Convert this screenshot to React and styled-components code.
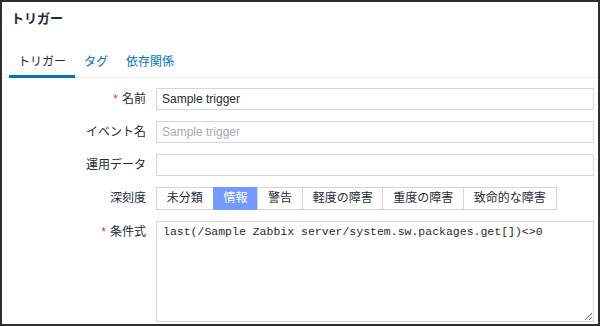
import styled, { createGlobalStyle } from "styled-components";

const GlobalStyle = createGlobalStyle`
  body {
    margin: 0;
    background: #ffffff;
    font-family: "Liberation Sans", Arial, "Noto Sans CJK JP", sans-serif;
    color: #1f2c33;
  }
`;

const Frame = styled.div`
  width: 600px;
  height: 326px;
  box-sizing: border-box;
  border: 2px solid #2e2e2e;
  background: #ffffff;
  overflow: hidden;
`;

const Title = styled.h2`
  margin: 0;
  padding: 8px 0 0 9px;
  font-size: 13px;
  line-height: 18px;
  font-weight: bold;
  color: #1f2c33;
`;

const TabBar = styled.div`
  display: flex;
  margin-top: 18px;
  padding-left: 7px;
  height: 31px;
  border-bottom: 1px solid #ebeef0;
`;

const Tab = styled.div`
  padding: 8px 9px 5px;
  font-size: 12px;
  line-height: 16px;
  height: 16px;
  color: ${(p) => (p.$active ? "#1f2c33" : "#0275b8")};
  border-bottom: 3px solid ${(p) => (p.$active ? "#0275b8" : "transparent")};
`;

const Form = styled.div`
  display: grid;
  grid-template-columns: 144px 1fr;
  column-gap: 10px;
  row-gap: 11px;
  padding: 10px 4px 0 0;
`;

const Label = styled.div`
  text-align: right;
  font-size: 12px;
  line-height: 22px;
  color: #1f2c33;
`;

const Required = styled.span`
  color: #e33734;
  margin-right: 4px;
  font-size: 12px;
`;

const TextInput = styled.input`
  box-sizing: border-box;
  width: 100%;
  height: 22px;
  margin: 0;
  border: 1px solid #cfd8dc;
  padding: 0 5px;
  font-family: inherit;
  font-size: 12px;
  color: #1f2c33;
  background: #ffffff;
  outline: none;

  &::placeholder {
    color: #a3acb0;
  }
`;

const Segments = styled.div`
  display: flex;
`;

const Segment = styled.div`
  box-sizing: border-box;
  height: 23px;
  padding: 0 9.8px;
  font-size: 12px;
  line-height: 21px;
  border: 1px solid ${(p) => (p.$active ? "#7499ff" : "#cfd8dc")};
  margin-left: -1px;
  background: ${(p) => (p.$active ? "#7499ff" : "#ffffff")};
  color: ${(p) => (p.$active ? "#ffffff" : "#1f2c33")};

  &:first-child {
    margin-left: 0;
  }
`;

const Expression = styled.textarea`
  box-sizing: border-box;
  width: 100%;
  height: 101px;
  margin: 0;
  border: 1px solid #cfd8dc;
  padding: 3px 6px;
  font-family: "Liberation Mono", "DejaVu Sans Mono", monospace;
  font-size: 11.5px;
  line-height: 14px;
  color: #1f2c33;
  resize: vertical;
  outline: none;
`;

const severities = ["未分類", "情報", "警告", "軽度の障害", "重度の障害", "致命的な障害"];

export default function App() {
  return (
    <>
      <GlobalStyle />
      <Frame>
        <Title>トリガー</Title>
        <TabBar>
          <Tab $active>トリガー</Tab>
          <Tab>タグ</Tab>
          <Tab>依存関係</Tab>
        </TabBar>
        <Form>
          <Label>
            <Required>*</Required>名前
          </Label>
          <TextInput defaultValue="Sample trigger" />

          <Label>イベント名</Label>
          <TextInput placeholder="Sample trigger" />

          <Label>運用データ</Label>
          <TextInput />

          <Label>深刻度</Label>
          <Segments>
            {severities.map((s) => (
              <Segment key={s} $active={s === "情報"}>
                {s}
              </Segment>
            ))}
          </Segments>

          <Label>
            <Required>*</Required>条件式
          </Label>
          <Expression
            readOnly
            value="last(/Sample Zabbix server/system.sw.packages.get[])<>0"
          />
        </Form>
      </Frame>
    </>
  );
}
